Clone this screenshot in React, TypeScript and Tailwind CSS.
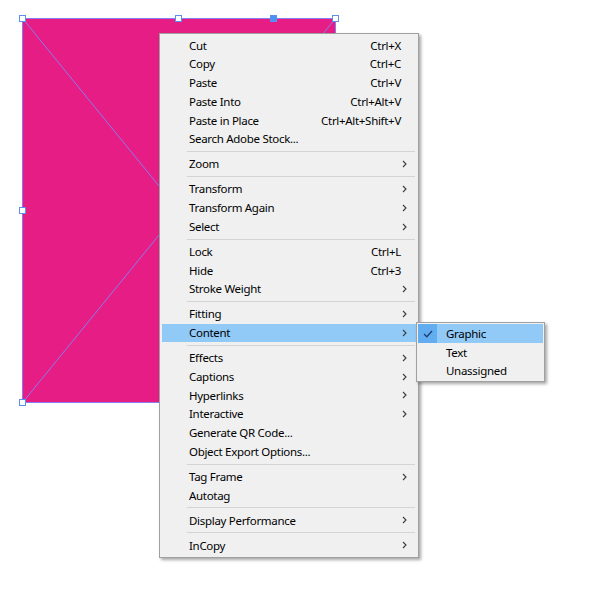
import React from "react";

type Item = { label: string; shortcut?: string; sub?: boolean; active?: boolean } | "sep";

const items: Item[] = [
  { label: "Cut", shortcut: "Ctrl+X" },
  { label: "Copy", shortcut: "Ctrl+C" },
  { label: "Paste", shortcut: "Ctrl+V" },
  { label: "Paste Into", shortcut: "Ctrl+Alt+V" },
  { label: "Paste in Place", shortcut: "Ctrl+Alt+Shift+V" },
  { label: "Search Adobe Stock..." },
  "sep",
  { label: "Zoom", sub: true },
  "sep",
  { label: "Transform", sub: true },
  { label: "Transform Again", sub: true },
  { label: "Select", sub: true },
  "sep",
  { label: "Lock", shortcut: "Ctrl+L" },
  { label: "Hide", shortcut: "Ctrl+3" },
  { label: "Stroke Weight", sub: true },
  "sep",
  { label: "Fitting", sub: true },
  { label: "Content", sub: true, active: true },
  "sep",
  { label: "Effects", sub: true },
  { label: "Captions", sub: true },
  { label: "Hyperlinks", sub: true },
  { label: "Interactive", sub: true },
  { label: "Generate QR Code..." },
  { label: "Object Export Options..." },
  "sep",
  { label: "Tag Frame", sub: true },
  { label: "Autotag" },
  "sep",
  { label: "Display Performance", sub: true },
  "sep",
  { label: "InCopy", sub: true },
];

function Chevron() {
  return (
    <svg width="5" height="8" viewBox="0 0 5 8" className="block">
      <path d="M1 1 L4 4 L1 7" fill="none" stroke="#3c3c3c" strokeWidth="1.1" />
    </svg>
  );
}

function Handle({ x, y, filled }: { x: number; y: number; filled?: boolean }) {
  return (
    <div
      className={`absolute w-[7px] h-[7px] border border-[#5b8ff0] ${filled ? "bg-[#4a90f5]" : "bg-white"}`}
      style={{ left: x - 3, top: y - 3 }}
    />
  );
}

export default function App() {
  return (
    <div
      className="relative w-[600px] h-[600px] bg-white overflow-hidden text-[11.5px] tracking-[-0.3px] text-black"
      style={{ fontFamily: '"Noto Sans", "Open Sans", sans-serif' }}
    >
      {/* Frame */}
      <div className="absolute left-[22px] top-[18px] w-[314px] h-[385px] bg-[#e61d84] border border-[#8a7bf0]">
        <svg className="absolute inset-0" width="312" height="383" viewBox="0 0 312 383">
          <line x1="0" y1="0" x2="312" y2="383" stroke="#8a7bf0" strokeWidth="1" />
          <line x1="312" y1="0" x2="0" y2="383" stroke="#8a7bf0" strokeWidth="1" />
        </svg>
      </div>
      <Handle x={22} y={18} />
      <Handle x={178} y={18} />
      <Handle x={273} y={18} filled />
      <Handle x={335} y={18} />
      <Handle x={22} y={210} />
      <Handle x={22} y={402} />

      {/* Context menu */}
      <div className="absolute left-[159px] top-[33px] w-[260px] bg-[#f0f0f0] border border-[#a0a0a0] pt-[2px] pb-[2px] px-[2px] shadow-[2px_2px_3px_rgba(0,0,0,0.35)]">
        {items.map((it, i) =>
          it === "sep" ? (
            <div key={i} className="h-[6.25px] flex items-center pl-[25px] pr-[1px]">
              <div className="h-px w-full bg-[#d4d4d4]" />
            </div>
          ) : (
            <div
              key={i}
              className={`h-[18.75px] flex items-center pl-[27px] pr-[9px] leading-none ${it.active ? "bg-[#91c9f7]" : ""}`}
            >
              <span className="flex-1 whitespace-nowrap">{it.label}</span>
              {it.shortcut && <span className="whitespace-nowrap mr-[6px]">{it.shortcut}</span>}
              {it.sub && <Chevron />}
            </div>
          )
        )}
      </div>

      {/* Submenu */}
      <div className="absolute left-[416px] top-[322px] w-[129px] bg-[#f0f0f0] border border-[#a0a0a0] py-[1px] px-[1px] shadow-[2px_2px_3px_rgba(0,0,0,0.35)]">
        <div className="h-[19px] flex items-center bg-[#91c9f7]">
          <div className="w-[19px] h-full bg-[#62acf0] flex items-center justify-center">
            <svg width="10" height="8" viewBox="0 0 10 8">
              <path d="M1 4 L3.8 6.8 L9 1" fill="none" stroke="#1b3f73" strokeWidth="1.3" />
            </svg>
          </div>
          <span className="pl-[9px] leading-none">Graphic</span>
        </div>
        <div className="h-[18.5px] flex items-center pl-[28px] leading-none">Text</div>
        <div className="h-[18.5px] flex items-center pl-[28px] leading-none">Unassigned</div>
      </div>
    </div>
  );
}
